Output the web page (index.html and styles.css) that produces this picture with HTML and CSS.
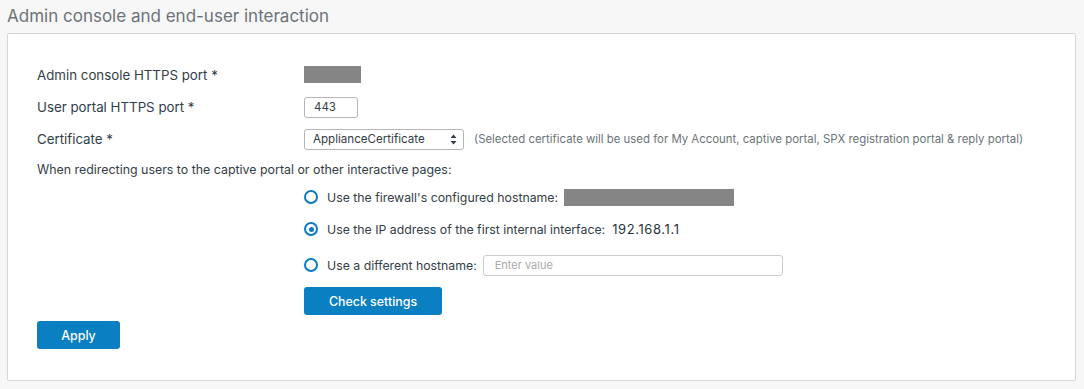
FILE: index.html
```html
<!DOCTYPE html>
<html lang="en">
<head>
    <meta charset="UTF-8">
    <title>Admin console and end-user interaction</title>
    <link rel="stylesheet" href="styles.css">
</head>
<body>
    <h2 class="section-title">Admin console and end-user interaction</h2>
    <div class="panel">
        <div class="form-row">
            <label class="field-label">Admin console HTTPS port *</label>
            <span class="redacted redacted-port"></span>
        </div>
        <div class="form-row">
            <label class="field-label">User portal HTTPS port *</label>
            <input type="text" class="port-input" value="443">
        </div>
        <div class="form-row">
            <label class="field-label">Certificate *</label>
            <div class="select-box">
                <span>ApplianceCertificate</span>
                <svg class="select-arrows" width="7" height="11" viewBox="0 0 7 11"><path d="M3.5 0.5 L6.5 4 L0.5 4 Z M3.5 10.5 L6.5 7 L0.5 7 Z" fill="#333d47"/></svg>
            </div>
            <span class="help-text">(Selected certificate will be used for My Account, captive portal, SPX registration portal &amp; reply portal)</span>
        </div>
        <p class="redirect-text">When redirecting users to the captive portal or other interactive pages:</p>
        <div class="radio-group">
            <div class="radio-row">
                <span class="radio"></span>
                <span>Use the firewall's configured hostname:</span>
                <span class="redacted redacted-host"></span>
            </div>
            <div class="radio-row">
                <span class="radio checked"></span>
                <span>Use the IP address of the first internal interface:</span>
                <span class="ip-value">192.168.1.1</span>
            </div>
            <div class="radio-row">
                <span class="radio"></span>
                <span>Use a different hostname:</span>
                <input type="text" class="host-input" placeholder="Enter value">
            </div>
            <button class="btn check-button">Check settings</button>
        </div>
        <button class="btn apply-button">Apply</button>
    </div>
</body>
</html>
```

FILE: styles.css
```css
body {
    margin: 0;
    padding: 0;
    background-color: #f7f7f7;
    font-family: Inter, "Open Sans", sans-serif;
    font-size: 13.3px;
    color: #333d47;
}
.section-title {
    margin: 0;
    height: 33px;
    padding-left: 7px;
    font-size: 17px;
    font-weight: normal;
    line-height: 32px;
    color: #6b7378;
}
.panel {
    margin: 0 8px 0 7px;
    height: 348px;
    box-sizing: border-box;
    background-color: #fff;
    border: 1px solid #d6d6d6;
    border-radius: 2px;
    padding: 30px 0 0 29px;
}
.form-row {
    display: flex;
    align-items: center;
    height: 22px;
    margin-bottom: 10px;
}
.field-label {
    width: 267px;
}
.redacted {
    display: inline-block;
    background-color: #858585;
}
.redacted-port {
    width: 57px;
    height: 17px;
    margin-top: -2px;
}
.redacted-host {
    width: 170px;
    height: 17px;
    margin-left: 6px;
}
.port-input {
    width: 54px;
    height: 21px;
    box-sizing: border-box;
    border: 1px solid #b5b5b5;
    border-radius: 3px;
    padding: 0 9px;
    font-family: inherit;
    font-size: 11.5px;
    color: #333d47;
}
.select-box {
    width: 160px;
    height: 21px;
    box-sizing: border-box;
    border: 1px solid #b5b5b5;
    border-radius: 3px;
    padding: 0 6px 0 8px;
    display: flex;
    align-items: center;
    justify-content: space-between;
    font-size: 11.6px;
}
.help-text {
    margin-left: 10px;
    font-size: 11.4px;
    color: #6b7378;
}
.redirect-text {
    margin: 0;
    line-height: 20px;
    font-size: 12.4px;
}
.radio-group {
    padding-left: 267px;
    padding-top: 6px;
    font-size: 12.3px;
}
.radio-row {
    display: flex;
    align-items: center;
    height: 22px;
    margin-bottom: 11px;
}
.radio-row:first-child {
    margin-bottom: 10px;
}
.radio-row:nth-child(2) {
    margin-bottom: 14px;
}
.radio {
    width: 10px;
    height: 10px;
    border: 2px solid #0a7bc1;
    border-radius: 50%;
    margin-right: 9px;
    position: relative;
}
.radio.checked::after {
    content: "";
    position: absolute;
    top: 2.5px;
    left: 2.5px;
    width: 5px;
    height: 5px;
    border-radius: 50%;
    background-color: #0a7bc1;
}
.ip-value {
    margin-left: 7px;
    font-size: 13px;
    letter-spacing: 0.6px;
    color: #2b343d;
}
.host-input {
    margin-left: 6px;
    width: 300px;
    height: 21px;
    box-sizing: border-box;
    border: 1px solid #ccc;
    border-radius: 3px;
    padding: 0 11px;
    font-family: inherit;
    font-size: 11px;
}
.host-input::placeholder {
    color: #a9a9a9;
}
.btn {
    background-color: #0a7fc1;
    color: white;
    border: none;
    border-radius: 3px;
    font-family: inherit;
    font-size: 12.4px;
    font-weight: 500;
    cursor: pointer;
}
.check-button {
    width: 138px;
    height: 28px;
    margin-top: 0;
}
.apply-button {
    width: 83px;
    height: 28px;
    margin-top: 6px;
}
```
